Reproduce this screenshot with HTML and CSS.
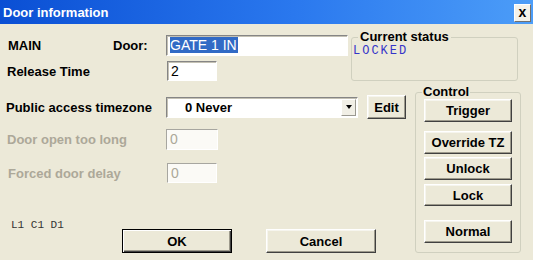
FILE: index.html
```html
<!DOCTYPE html>
<html lang="en">

<head>
    <meta charset="UTF-8">
    <title>Door information</title>
    <link rel="stylesheet" href="styles.css">
</head>

<body>
    <div class="titlebar">
        <span class="title">Door information</span>
        <span class="close">x</span>
    </div>
    <div class="dialog">
        <div class="top">
            <div class="fields">
                <div class="row row-door">
                    <span class="lbl lbl-main">MAIN</span>
                    <span class="lbl lbl-door">Door:</span>
                    <span class="edit edit-door"><span class="selected">GATE 1 IN</span></span>
                </div>
                <div class="row row-release">
                    <span class="lbl">Release Time</span>
                    <span class="edit edit-release">2</span>
                </div>
            </div>
            <fieldset class="group group-status">
                <legend>Current status</legend>
                <div class="status">LOCKED</div>
            </fieldset>
        </div>
        <div class="bottom">
            <div class="left">
                <div class="row row-tz">
                    <span class="lbl">Public access timezone</span>
                    <span class="combo">
                        <span class="combo-text">0 Never</span>
                        <span class="combo-btn"><span class="arrow"></span></span>
                    </span>
                    <button class="btn btn-edit">Edit</button>
                </div>
                <div class="row row-open">
                    <span class="lbl disabled">Door open too long</span>
                    <span class="edit edit-off">0</span>
                </div>
                <div class="row row-forced">
                    <span class="lbl disabled">Forced door delay</span>
                    <span class="edit edit-off">0</span>
                </div>
                <div class="footer">
                    <span class="loc">L1 C1 D1</span>
                    <button class="btn btn-wide btn-default">OK</button>
                    <button class="btn btn-wide btn-cancel">Cancel</button>
                </div>
            </div>
            <fieldset class="group group-control">
                <legend>Control</legend>
                <button class="btn btn-ctl">Trigger</button>
                <button class="btn btn-ctl btn-override">Override TZ</button>
                <button class="btn btn-ctl btn-unlock">Unlock</button>
                <button class="btn btn-ctl btn-lock">Lock</button>
                <button class="btn btn-ctl btn-normal">Normal</button>
            </fieldset>
        </div>
    </div>
</body>

</html>
```

FILE: styles.css
```css
body {
    margin: 0;
    width: 533px;
    height: 260px;
    overflow: hidden;
    background: #ece9d8;
    font-family: "Liberation Sans", Arial, sans-serif;
    font-size: 13px;
    font-weight: bold;
    color: #000;
}

.titlebar {
    height: 24px;
    display: flex;
    align-items: center;
    justify-content: space-between;
    padding: 0 2px 0 3px;
    background: linear-gradient(to right, #0a4fd4, #2a78ee 55%, #4c9df8);
    color: #fff;
}

.title {
    font-size: 13px;
    font-weight: bold;
}

.close {
    width: 15px;
    height: 16px;
    margin-top: 1px;
    line-height: 14px;
    text-align: center;
    font-size: 14px;
    color: #000;
    background: #f4f2ea;
    border: 1px solid;
    border-color: #fff #707070 #707070 #fff;
}

.dialog {
    height: 236px;
}

.top {
    display: flex;
}

.fields {
    width: 351px;
}

.row {
    display: flex;
    align-items: center;
}

.lbl {
    width: 160px;
    white-space: nowrap;
}

.disabled {
    color: #aca899;
}

.row-door {
    margin-top: 11px;
    padding-left: 8px;
}

.lbl-main {
    width: 105px;
}

.lbl-door {
    width: 53px;
}

.row-release {
    margin-top: 5px;
    padding-left: 7px;
}

.edit {
    box-sizing: border-box;
    height: 21px;
    padding-left: 3px;
    background: #fff;
    border: 1px solid;
    border-color: #858585 #fff #fff #858585;
    box-shadow: inset 1px 1px #c4c1b4;
    font-weight: normal;
    font-size: 14px;
    line-height: 19px;
}

.edit-door {
    width: 182px;
    padding-top: 1px;
    line-height: 16px;
}

.selected {
    display: inline-block;
    background: #316ac5;
    color: #fff;
    padding-right: 1px;
}

.edit-release {
    width: 50px;
    height: 20px;
    line-height: 18px;
}

.edit-off {
    width: 52px;
    color: #aca899;
    background: #fbfaf6;
    border-color: #a7a6a0 #fff #fff #a7a6a0;
    box-shadow: none;
}

.group {
    margin: 0;
    padding: 0;
    border: 1px solid #d0d0bf;
    border-radius: 3px;
    min-width: 0;
}

.group legend {
    font-size: 13px;
    line-height: 14px;
}

.group-status {
    box-sizing: border-box;
    width: 167px;
    margin-top: 6px;
    padding: 0 1px;
}

.group-status legend {
    margin-left: 5px;
    padding: 0 2px;
}

.status {
    height: 36px;
    padding-top: 1px;
    box-sizing: border-box;
    font-family: "Liberation Mono", "Courier New", monospace;
    font-weight: normal;
    font-size: 12px;
    line-height: 13px;
    letter-spacing: 2px;
    color: #3434c8;
}

.bottom {
    display: flex;
}

.left {
    width: 415px;
}

.row-tz {
    margin-top: 14px;
    padding-left: 6px;
    height: 24px;
}

.combo {
    box-sizing: border-box;
    width: 192px;
    height: 21px;
    display: flex;
    align-items: center;
    justify-content: space-between;
    background: #fff;
    border: 1px solid;
    border-color: #858585 #fff #fff #858585;
    box-shadow: inset 1px 1px #c4c1b4;
}

.combo-text {
    padding-left: 18px;
}

.combo-btn {
    box-sizing: border-box;
    width: 15px;
    height: 17px;
    margin-right: 1px;
    display: flex;
    align-items: center;
    justify-content: center;
    background: #f1efe6;
    border: 1px solid;
    border-color: #fff #9a9890 #9a9890 #fff;
}

.arrow {
    width: 0;
    height: 0;
    border-left: 3px solid transparent;
    border-right: 3px solid transparent;
    border-top: 4px solid #000;
}

.btn {
    box-sizing: border-box;
    margin: 0;
    padding: 0;
    height: 23px;
    font: inherit;
    color: #000;
    background: #ece9d8;
    border: 1px solid;
    border-color: #fff #404040 #404040 #fff;
    box-shadow: inset -1px -1px #9d9a8c, inset 1px 1px #f6f5ee;
}

.btn-edit {
    width: 39px;
    height: 24px;
    margin-left: 9px;
}

.row-open {
    margin-top: 10px;
    padding-left: 7px;
}

.row-open .lbl {
    width: 159px;
}

.row-forced {
    margin-top: 13px;
    padding-left: 8px;
}

.row-forced .lbl {
    width: 159px;
}

.row-forced .edit {
    width: 50px;
    height: 20px;
    line-height: 18px;
}

.footer {
    display: flex;
    align-items: flex-start;
    margin-top: 36px;
    padding-left: 11px;
}

.loc {
    width: 111px;
    font-family: "Liberation Mono", "Courier New", monospace;
    font-weight: normal;
    font-size: 11px;
    line-height: 13px;
    color: #333;
}

.btn-wide {
    width: 110px;
    height: 24px;
    margin-top: 10px;
}

.btn-default {
    border-color: #000;
    box-shadow: inset 1px 1px #fff, inset -1px -1px #404040, inset -2px -2px #9d9a8c;
}

.btn-cancel {
    margin-left: 34px;
}

.group-control {
    box-sizing: border-box;
    width: 106px;
    margin-top: 4px;
    padding: 0 7px 5px 8px;
    display: flex;
    flex-direction: column;
}

.group-control legend {
    margin-left: -2px;
    padding: 0 1px;
}

.btn-ctl {
    width: 88px;
}

.btn-override {
    margin-top: 9px;
}

.btn-unlock {
    margin-top: 3px;
}

.btn-lock {
    margin-top: 4px;
    height: 22px;
}

.btn-normal {
    margin-top: 14px;
}
```
